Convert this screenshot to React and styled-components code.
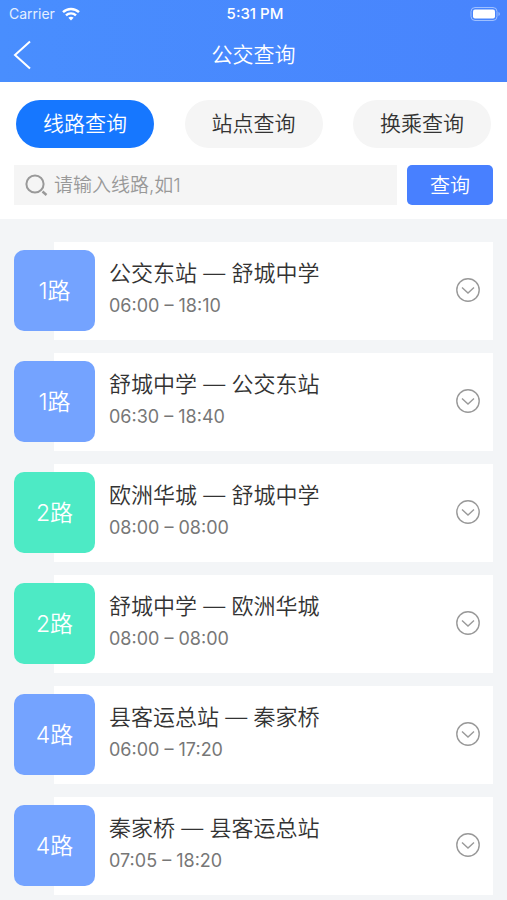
import React, { useState } from "react";
import styled, { createGlobalStyle } from "styled-components";

const GlobalStyle = createGlobalStyle`
  *, *::before, *::after { box-sizing: border-box; }
  body {
    margin: 0;
    background: #f3f5f7;
    font-family: Inter, "Noto Sans CJK SC", sans-serif;
    font-weight: 350;
    color: #333;
  }
  button, input { font: inherit; }
  button { border: 0; padding: 0; cursor: pointer; }
`;

const Header = styled.header`
  background: linear-gradient(90deg, #498efe, #4884fd);
  color: #fff;
`;

const StatusBar = styled.div`
  display: grid;
  grid-template-columns: 1fr auto 1fr;
  align-items: center;
  height: 28px;
  padding: 0 6px 0 9px;
  font-size: 14px;
  line-height: 20px;
`;

const Carrier = styled.div`
  display: flex;
  align-items: center;
  gap: 7px;
  color: #e4efff;
  font-weight: 400;
`;

const Clock = styled.div`
  font-size: 15px;
  font-weight: 500;
`;

const BatteryIcon = styled.svg`
  justify-self: end;
`;

const NavBar = styled.div`
  display: grid;
  grid-template-columns: 44px 1fr 44px;
  align-items: center;
  height: 54px;
`;

const BackButton = styled.button`
  display: grid;
  place-items: center;
  height: 44px;
  background: none;
  color: #fff;
`;

const PageTitle = styled.h1`
  margin: 0;
  text-align: center;
  font-size: 21px;
  font-weight: 350;
  line-height: 28px;
`;

const SearchPanel = styled.section`
  padding: 18px 14px 14px;
  background: #fff;
`;

const Tabs = styled.div`
  display: flex;
  justify-content: space-between;
  padding: 0 2px;
`;

const Tab = styled.button`
  width: 138px;
  height: 48px;
  padding-bottom: 4px;
  border-radius: 24px;
  background: ${(p) => (p.$active ? "#1677ff" : "#f5f5f5")};
  color: ${(p) => (p.$active ? "#fff" : "#333")};
  font-size: 21px;
`;

const SearchForm = styled.form`
  display: flex;
  gap: 10px;
  margin-top: 17px;
`;

const SearchField = styled.label`
  display: flex;
  flex: 1;
  align-items: center;
  gap: 6px;
  min-width: 0;
  height: 40px;
  padding: 0 11px;
  background: #f5f5f5;
  color: #999;
`;

const SearchInput = styled.input`
  flex: 1;
  min-width: 0;
  padding: 0;
  border: 0;
  outline: 0;
  background: none;
  color: #333;
  font-size: 19px;
  &::placeholder { color: #999; opacity: 1; }
`;

const SearchButton = styled.button`
  width: 86px;
  height: 40px;
  padding-bottom: 2px;
  border-radius: 5px;
  background: #4880ff;
  color: #fff;
  font-size: 20px;
`;

const RouteList = styled.ul`
  display: flex;
  flex-direction: column;
  gap: 13px;
  margin: 0;
  padding: 23px 14px 4px;
  list-style: none;
`;

const RouteCard = styled.li`
  display: flex;
  align-items: center;
  height: 98px;
  margin-left: 40px;
  padding: 0 13px 2px 0;
  background: #fff;
`;

const Badge = styled.div`
  flex: none;
  display: grid;
  place-items: center;
  width: 81px;
  height: 81px;
  margin-left: -40px;
  padding-bottom: 2px;
  border-radius: 10px;
  background: ${(p) => p.$color};
  color: #fff;
  font-size: 23px;
  font-weight: 350;
`;

const RouteText = styled.div`
  flex: 1;
  min-width: 0;
  padding: 0 14px 5px;
`;

const RouteName = styled.h2`
  margin: 0;
  font-size: 22px;
  font-weight: 350;
  line-height: 36px;
`;

const RouteHours = styled.div`
  color: #777;
  font-size: 18px;
  font-weight: 400;
  line-height: 30px;
`;

const ExpandButton = styled.button`
  display: grid;
  place-items: center;
  width: 24px;
  height: 24px;
  background: none;
  color: #999;
`;

const tabs = ["线路查询", "站点查询", "换乘查询"];
const blue = "#74a3ff";
const green = "#4deac5";

const routes = [
  { line: "1路", color: blue, name: "公交东站 — 舒城中学", hours: "06:00 – 18:10" },
  { line: "1路", color: blue, name: "舒城中学 — 公交东站", hours: "06:30 – 18:40" },
  { line: "2路", color: green, name: "欧洲华城 — 舒城中学", hours: "08:00 – 08:00" },
  { line: "2路", color: green, name: "舒城中学 — 欧洲华城", hours: "08:00 – 08:00" },
  { line: "4路", color: blue, name: "县客运总站 — 秦家桥", hours: "06:00 – 17:20" },
  { line: "4路", color: blue, name: "秦家桥 — 县客运总站", hours: "07:05 – 18:20" },
];

export default function App() {
  const [active, setActive] = useState(0);
  return (
    <>
      <GlobalStyle />
      <Header>
        <StatusBar>
          <Carrier>
            Carrier
            <svg width="18" height="14" viewBox="0 0 18 14" fill="none" stroke="#fff" strokeWidth="2.4">
              <path d="M1 5.2C5.4.9 12.6.9 17 5.2" />
              <path d="M4 8.4c2.8-2.7 7.2-2.7 10 0" />
              <path d="M6.4 10.7c1.5-1.3 3.7-1.3 5.2 0L9 13.4z" fill="#fff" stroke="none" />
            </svg>
          </Carrier>
          <Clock>5:31 PM</Clock>
          <BatteryIcon width="31" height="14" viewBox="0 0 31 14">
            <rect x="1" y=".5" width="26" height="13" rx="4" fill="none" stroke="#9fc0ff" />
            <rect x="3" y="2.5" width="22" height="9" rx="2" fill="#fff" />
            <path d="M28.5 5v4c1.8-.8 1.8-3.2 0-4z" fill="#9fc0ff" />
          </BatteryIcon>
        </StatusBar>
        <NavBar>
          <BackButton aria-label="返回">
            <svg width="18" height="30" viewBox="0 0 18 30" fill="none" stroke="currentColor" strokeWidth="2">
              <path d="M17 1.5 2 15l15 13.5" />
            </svg>
          </BackButton>
          <PageTitle>公交查询</PageTitle>
        </NavBar>
      </Header>
      <SearchPanel>
        <Tabs>
          {tabs.map((t, i) => (
            <Tab key={t} type="button" $active={i === active} aria-pressed={i === active} onClick={() => setActive(i)}>
              {t}
            </Tab>
          ))}
        </Tabs>
        <SearchForm onSubmit={(e) => e.preventDefault()}>
          <SearchField>
            <svg width="23" height="23" viewBox="0 0 23 23" fill="none" stroke="currentColor" strokeWidth="2">
              <circle cx="10" cy="10" r="8.6" />
              <path d="m17.5 17.5 4 3.5" strokeWidth="2.4" />
            </svg>
            <SearchInput aria-label="线路" placeholder="请输入线路,如1" />
          </SearchField>
          <SearchButton type="submit">查询</SearchButton>
        </SearchForm>
      </SearchPanel>
      <RouteList>
        {routes.map((r) => (
          <RouteCard key={r.name}>
            <Badge $color={r.color}>{r.line}</Badge>
            <RouteText>
              <RouteName>{r.name}</RouteName>
              <RouteHours>{r.hours}</RouteHours>
            </RouteText>
            <ExpandButton aria-label={`展开 ${r.name}`}>
              <svg width="24" height="24" viewBox="0 0 24 24" fill="none" stroke="currentColor" strokeWidth="1.4">
                <circle cx="12" cy="12" r="11.2" />
                <path d="m6 9.5 6 5.5 6-5.5" />
              </svg>
            </ExpandButton>
          </RouteCard>
        ))}
      </RouteList>
    </>
  );
}
